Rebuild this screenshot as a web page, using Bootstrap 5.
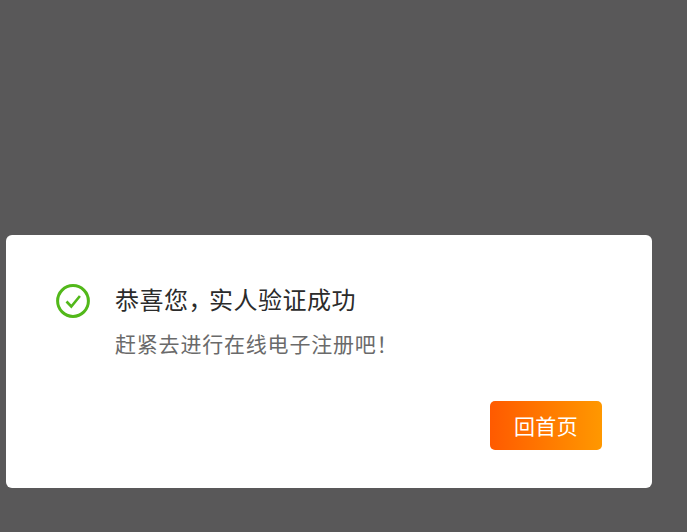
<!DOCTYPE html>
<html lang="zh"><head><meta charset="utf-8">
<link href="https://cdn.jsdelivr.net/npm/bootstrap@5.3.0/dist/css/bootstrap.min.css" rel="stylesheet">
<style>
html,body{height:100%}
body{background:#595859;font-family:"Noto Sans CJK SC","Liberation Sans",sans-serif;overflow:hidden}
.stage{height:532px;padding:235px 35px 44px 6px}
.dialog-box{height:253px;background:#fff;border-radius:6px;padding:49px 50px 38px 50px}
.tick{width:34px;height:34px;margin-right:25px;flex:none}
.ttl{font-size:24px;line-height:34px;color:#2b2b2b;letter-spacing:.5px;margin-top:-2px}
.cm{letter-spacing:-3.5px}
.sub{font-size:21px;line-height:30px;color:#6a6a6a;margin-top:12px;letter-spacing:.8px}
.go{width:112px;height:49px;border:0;border-radius:5px;color:#fff;font-size:21px;padding:0;letter-spacing:.4px;background:linear-gradient(90deg,#ff5a00,#ff9800)}
.go:hover{color:#fff}
</style></head><body>
<div class="stage"><div class="dialog-box d-flex flex-column">
<div class="d-flex align-items-start flex-grow-1">
<svg class="tick" viewBox="0 0 34 34"><circle cx="17" cy="17" r="15.4" fill="none" stroke="#52b81a" stroke-width="3"/><path d="M10.5 17.5l4.8 5 8.6-10.5" fill="none" stroke="#52b81a" stroke-width="2.6"/></svg>
<div><div class="ttl">恭喜您<span class="cm">，</span>实人验证成功</div><div class="sub">赶紧去进行在线电子注册吧！</div></div>
</div>
<div class="d-flex justify-content-end"><button class="btn go">回首页</button></div>
</div></div>
<script src="https://cdn.jsdelivr.net/npm/bootstrap@5.3.0/dist/js/bootstrap.bundle.min.js"></script>
</body></html>
